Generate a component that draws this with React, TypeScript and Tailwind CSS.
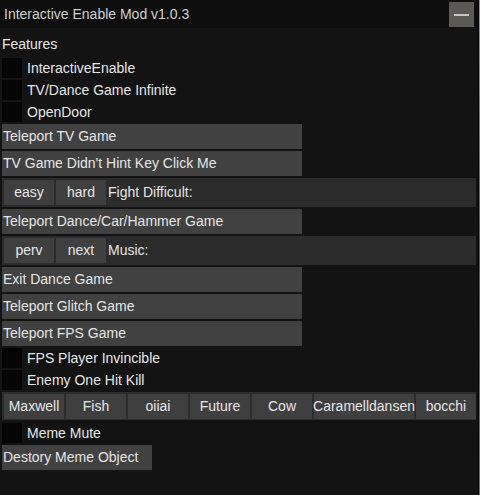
import React from 'react';

const font = "font-['Liberation_Sans',Arial,sans-serif]";

const Check = ({ label }: { label: string }) => (
  <div className="flex items-center h-[20px] gap-[5px]">
    <div className="w-[20px] h-[20px] bg-[#050505]" />
    <span className="text-[14px] leading-none text-[#e6e6e6]">{label}</span>
  </div>
);

const WideButton = ({ label, w = 'w-[300px]' }: { label: string; w?: string }) => (
  <div className={`${w} h-[25px] bg-[#414141] flex items-center pl-px text-[14px] text-[#e6e6e6] whitespace-nowrap`}>
    {label}
  </div>
);

const SmallButton = ({ label, w = 'w-[50px]' }: { label: string; w?: string }) => (
  <div className={`${w} h-[25px] bg-[#3f3f3f] flex items-center justify-center text-[14px] text-[#e6e6e6] whitespace-nowrap`}>
    {label}
  </div>
);

const App = () => {
  const memes = ['Maxwell', 'Fish', 'oiiai', 'Future', 'Cow'];
  return (
    <div className={`w-[480px] h-[495px] flex ${font}`}>
      <div className="w-[479px] h-full bg-[#131313] border-r border-[#050505] flex flex-col">
        {/* title bar */}
        <div className="h-[28px] bg-[#0e0e0e] flex items-start justify-between pl-[4px] pr-[4px] pt-[2px]">
          <span className="text-[14px] leading-[25px] text-[#cfcfcf]">Interactive Enable Mod v1.0.3</span>
          <div className="w-[25px] h-[25px] bg-[#5a5954] flex items-center justify-center">
            <div className="w-[15px] h-[2px] bg-[#c8c8c8]" />
          </div>
        </div>

        <div className="flex flex-col gap-[2px] px-[2px]">
          <div className="h-[28px] pt-[8px] text-[14px] leading-[16px] text-[#e6e6e6]">Features</div>
          <Check label="InteractiveEnable" />
          <Check label="TV/Dance Game Infinite" />
          <Check label="OpenDoor" />
          <WideButton label="Teleport TV Game" />
          <WideButton label="TV Game Didn't Hint Key Click Me" />
          <div className="h-[29px] bg-[#2b2b2b] flex items-center gap-[2px] px-[2px]">
            <SmallButton label="easy" />
            <SmallButton label="hard" />
            <span className="text-[14px] text-[#e6e6e6]">Fight Difficult:</span>
          </div>
          <WideButton label="Teleport Dance/Car/Hammer Game" />
          <div className="h-[29px] bg-[#2b2b2b] flex items-center gap-[2px] px-[2px]">
            <SmallButton label="perv" />
            <SmallButton label="next" />
            <span className="text-[14px] text-[#e6e6e6]">Music:</span>
          </div>
          <WideButton label="Exit Dance Game" />
          <WideButton label="Teleport Glitch Game" />
          <WideButton label="Teleport FPS Game" />
          <Check label="FPS Player Invincible" />
          <Check label="Enemy One Hit Kill" />
          <div className="h-[28px] bg-[#2c2c2c] flex items-center gap-[2px] pl-[2px]">
            {memes.map((m) => (
              <SmallButton key={m} label={m} w="w-[60px]" />
            ))}
            <SmallButton label="Caramelldansen" w="w-[100px]" />
            <SmallButton label="bocchi" w="w-[60px]" />
          </div>
          <div className="mt-px">
            <Check label="Meme Mute" />
          </div>
          <WideButton label="Destory Meme Object" w="w-[150px]" />
        </div>
      </div>
      <div className="w-px h-full bg-gradient-to-b from-[#b08a9a] via-[#a03080] to-[#8a6070]" />
    </div>
  );
};

export default App;
